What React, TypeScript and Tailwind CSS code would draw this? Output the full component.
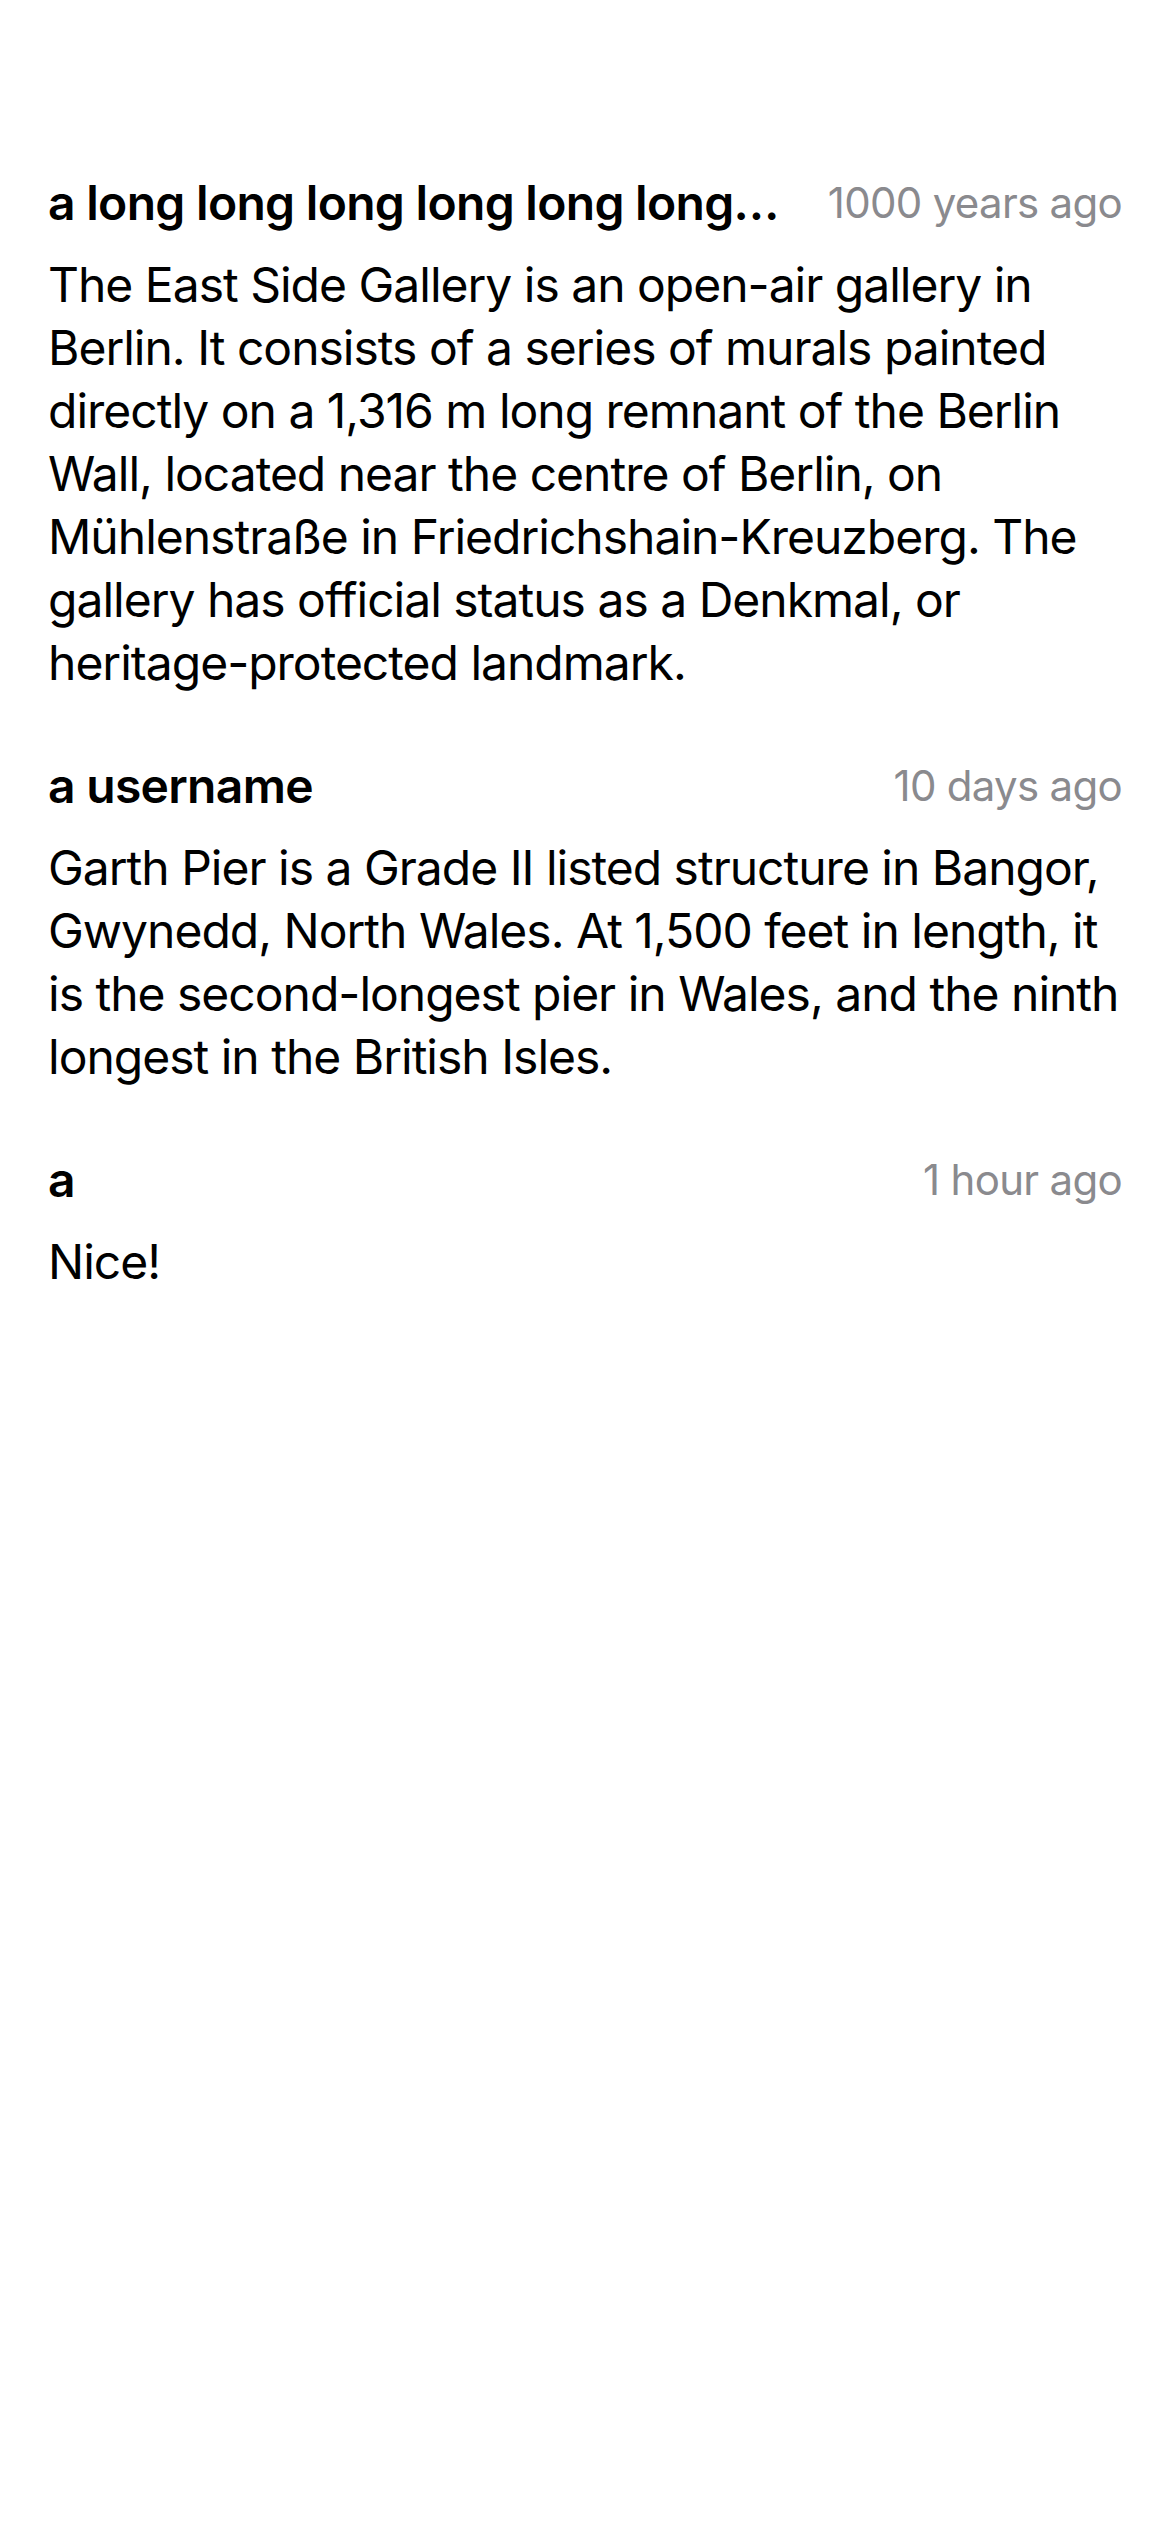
import React from 'react'

interface Comment {
  id: number
  author: string
  time: string
  body: string
}

const comments: Comment[] = [
  {
    id: 1,
    author: 'a long long long long long long long long long long long long username',
    time: '1000 years ago',
    body:
      'The East Side Gallery is an open-air gallery in Berlin. It consists of a series of murals painted directly on a 1,316 m long remnant of the Berlin Wall, located near the centre of Berlin, on Mühlenstraße in Friedrichshain-Kreuzberg. The gallery has official status as a Denkmal, or heritage-protected landmark.',
  },
  {
    id: 2,
    author: 'a username',
    time: '10 days ago',
    body:
      'Garth Pier is a Grade II listed structure in Bangor, Gwynedd, North Wales. At 1,500 feet in length, it is the second-longest pier in Wales, and the ninth longest in the British Isles.',
  },
  {
    id: 3,
    author: 'a',
    time: '1 hour ago',
    body: 'Nice!',
  },
]

function CommentRow({ comment }: { comment: Comment }) {
  return (
    <div>
      <div className="flex items-center gap-[42px] h-[60px] mb-[20px]">
        <span className="flex-1 min-w-0 truncate text-[48px] font-semibold tracking-[-0.7px] leading-[60px] text-black">
          {comment.author}
        </span>
        <span className="shrink-0 text-[42px] tracking-[-0.7px] leading-[60px] text-[#8a8a8e]">
          {comment.time}
        </span>
      </div>
      <p className="text-[48px] tracking-[-1px] leading-[63px] text-black">{comment.body}</p>
    </div>
  )
}

export default function App() {
  return (
    <div
      className="min-h-screen bg-white px-[48px] pt-[173px] flex flex-col gap-[62px]"
      style={{ fontFamily: 'Inter, "Noto Sans", sans-serif' }}
    >
      {comments.map((c) => (
        <CommentRow key={c.id} comment={c} />
      ))}
    </div>
  )
}
